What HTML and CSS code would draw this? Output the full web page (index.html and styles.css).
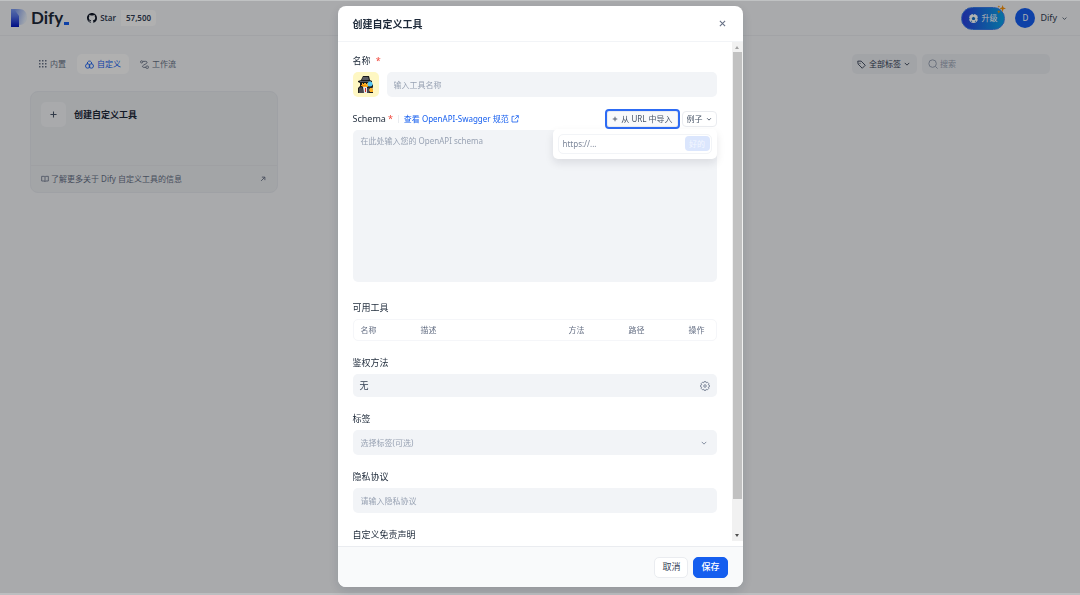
FILE: index.html
```html
<!DOCTYPE html>
<html lang="zh-Hans">
<head>
  <meta charset="utf-8">
  <meta name="viewport" content="width=device-width, initial-scale=1">
  <title>Dify</title>
  <link rel="stylesheet" href="styles.css">
</head>
<body>
  <header class="topbar">
    <a class="logo" href="#">
      <svg width="16" height="18" viewBox="0 0 16 18">
        <defs>
          <linearGradient id="logo-stem" x1="0" y1="0" x2="0" y2="1">
            <stop offset="0" stop-color="#7d9cf2"/>
            <stop offset=".4" stop-color="#5573e6"/>
            <stop offset="1" stop-color="#0014c0"/>
          </linearGradient>
          <linearGradient id="logo-bowl" x1="0" y1="0" x2="1" y2=".3">
            <stop offset="0" stop-color="#5c80ea"/>
            <stop offset="1" stop-color="#e3ebf7"/>
          </linearGradient>
        </defs>
        <path fill="url(#logo-bowl)" d="M0 0h8c5 0 8 3.500 8 8s-3 8-8 8z"/>
        <path fill="url(#logo-stem)" d="M0 0h3l5 7v11H0z"/>
      </svg>
      <span class="logo-text">Dify</span><span class="logo-dash"></span>
    </a>
    <a class="github" href="#">
      <span class="github-star">
        <svg width="10" height="10" viewBox="0 0 16 16"><path fill="#101828" d="M8 0C3.580 0 0 3.580 0 8c0 3.540 2.290 6.530 5.470 7.590.4.070.55-.17.55-.38v-1.490c-2.010.37-2.530-.49-2.690-.94-.09-.23-.48-.94-.82-1.130-.28-.15-.68-.52-.01-.53.63-.01 1.080.58 1.230.82.72 1.210 1.870.87 2.330.66.07-.52.28-.87.51-1.070-1.780-.2-3.640-.89-3.640-3.950 0-.87.31-1.590.82-2.150-.08-.2-.36-1.020.08-2.120 0 0 .67-.21 2.200.82a7.600 7.600 0 0 1 4 0c1.530-1.040 2.200-.82 2.200-.82.44 1.100.16 1.920.08 2.120.51.56.82 1.270.82 2.150 0 3.070-1.870 3.750-3.650 3.950.29.25.54.73.54 1.480v2.190c0 .21.15.46.55.38A8 8 0 0 0 16 8c0-4.420-3.580-8-8-8z"/></svg>
        Star
      </span>
      <span class="github-count">57,500</span>
    </a>
    <div class="account">
      <button class="upgrade" type="button">
        <svg width="9" height="9" viewBox="0 0 12 12"><circle cx="6" cy="6" r="6" fill="#fff"/><path fill="#1570c8" d="M6 3.500l2.400 1.800-.9 2.700h-3L3.600 5.300zM5 0h2L6 1.600zM0 5l1.500.8L1.200 7.600zM12 5l-1.500.8.3 1.800zM2.500 10.500l.4-1.700 1.600 1zM9.500 10.500l-.4-1.700-1.600 1z"/></svg>
        升级
        <svg class="sparkle" width="9" height="9" viewBox="0 0 12 12"><path fill="#f79009" d="M7.500 0l1.100 3.400L12 4.500 8.600 5.700 7.500 9.500 6.400 5.700 3 4.500l3.400-1.100zM2.500 6.500l.7 1.800 1.800.7-1.800.7-.7 1.800-.7-1.800L0 9l1.800-.7zM2.500.5l.5 1.300 1.300.5L3 2.800l-.5 1.300L2 2.800.7 2.300 2 1.800z"/></svg>
      </button>
      <button class="user" type="button">
        <span class="avatar">D</span>
        Dify
        <svg width="5" height="5" viewBox="0 0 8 8"><path class="stroke" d="M1 2.500l3 3 3-3"/></svg>
      </button>
    </div>
  </header>

  <main class="page">
    <div class="toolbar">
      <nav class="tabs">
        <a class="tab" href="#">
          <svg width="8" height="8" viewBox="0 0 8 8"><path fill="currentColor" d="M0 0h1.500v1.500H0zM3 0h1.500v1.500H3zM6 0h1.500v1.500H6zM0 3h1.500v1.500H0zM3 3h1.500v1.500H3zM6 3h1.500v1.500H6zM0 6h1.500v1.500H0zM3 6h1.500v1.500H3zM6 6h1.500v1.500H6z"/></svg>
          内置
        </a>
        <a class="tab tab-active" href="#">
          <svg width="9" height="9" viewBox="0 0 12 12"><g class="stroke"><path d="M3.300 5.400a2.900 2.900 0 1 1 5.400 0"/><circle cx="3.600" cy="8" r="2.900"/><circle cx="8.400" cy="8" r="2.900"/></g></svg>
          自定义
        </a>
        <a class="tab" href="#">
          <svg width="9" height="9" viewBox="0 0 12 12"><g class="stroke"><circle cx="2.200" cy="2.500" r="1.500"/><rect x="8" y="8" width="3.200" height="3.200" rx="1"/><path d="M4 1.800h3.500c2.500 0 2.500 2.200.5 3.200L4.500 7C2.500 8 3 9.800 5 9.800h3"/></g></svg>
          工作流
        </a>
      </nav>
      <div class="filters">
        <div class="label-filter">
          <svg width="9" height="9" viewBox="0 0 12 12"><path class="stroke" d="M1 1.500h4.500l5.500 5.500-4 4L1.500 5.500z"/><circle cx="4" cy="4.300" r=".8" fill="currentColor"/></svg>
          <select aria-label="标签"><option>全部标签</option></select>
          <svg width="6" height="6" viewBox="0 0 8 8"><path class="stroke" d="M1 2.500l3 3 3-3"/></svg>
        </div>
        <div class="search">
          <svg width="10" height="10" viewBox="0 0 12 12"><g class="stroke"><circle cx="5.500" cy="5.500" r="4.500"/><path d="M9 9l2.500 2.500"/></g></svg>
          <input type="text" placeholder="搜索" aria-label="搜索">
        </div>
      </div>
    </div>

    <div class="cards">
      <div class="card">
        <button class="card-main" type="button">
          <span class="card-icon">
            <svg width="7" height="7" viewBox="0 0 8 8"><path class="stroke" d="M4 .5v7M.5 4h7"/></svg>
          </span>
          创建自定义工具
        </button>
        <a class="card-link" href="#">
          <svg width="8" height="8" viewBox="0 0 12 12"><path class="stroke" d="M1 2h4l1 1 1-1h4v7H7l-1 1-1-1H1zM6 3v7"/></svg>
          <span>了解更多关于 Dify 自定义工具的信息</span>
          <svg width="6" height="6" viewBox="0 0 8 8"><path class="stroke" d="M1.500 6.500l5-5M2.500 1.500h4v4"/></svg>
        </a>
      </div>
    </div>
  </main>

  <div class="overlay">
    <form class="modal" role="dialog" aria-labelledby="modal-title">
      <div class="modal-header">
        <h1 id="modal-title">创建自定义工具</h1>
        <button class="close" type="button" aria-label="关闭">
          <svg width="7" height="7" viewBox="0 0 8 8"><path class="stroke" d="M1 1l6 6M7 1L1 7"/></svg>
        </button>
      </div>

      <div class="modal-body">
        <div class="fields">
          <div class="field">
            <div class="field-head"><label for="name">名称</label> <span class="required required-wide">*</span></div>
            <div class="name-row">
              <button class="emoji" type="button" aria-label="图标">
                <svg width="18" height="19" viewBox="0 0 18 19">
                  <path fill="#1c1c1c" d="M6 1h6l1 4 2 1v2h-1l2 2v2l-1 2 1 1v3H1v-5l2-2V8L1 7V6l3-1z"/>
                  <path fill="#5a5c62" d="M6 2h5l1 3H5zM3 6h11v1H3z"/>
                  <path fill="#48494e" d="M2 13l3-1 2 6H2zM10 13h2l1 2-1 3h-2z"/>
                  <path fill="#fdb022" d="M5 8h7v3l-2 1H6l-1-1z"/>
                  <path fill="#1c1c1c" d="M6 8h1v1H6zM9 8h1v1H9z"/>
                  <path fill="#f79009" d="M4 10h5v1H4z"/>
                  <path fill="#e4e7ec" d="M6 12h4v6H7z"/>
                  <path fill="#d92d20" d="M8 13h1v4H8z"/>
                  <circle cx="13" cy="9" r="2.500" fill="#53c7f5"/>
                  <path fill="#fdb022" d="M13 13h2l1 2v2h-3l-1-2z"/>
                </svg>
              </button>
              <input class="control" id="name" type="text" placeholder="输入工具名称">
            </div>
          </div>

          <div class="field field-schema">
            <div class="schema-head">
              <label for="schema">Schema</label><span class="required">*</span>
              <span class="divider"></span>
              <a class="spec-link" href="#">
                查看 OpenAPI-Swagger 规范
                <svg width="8" height="8" viewBox="0 0 12 12"><path class="stroke" d="M5 2H1.500v8.500H10V7M7 1h4v4M11 1L5.500 6.500"/></svg>
              </a>
              <div class="schema-actions">
                <button class="small-button import-button" type="button">
                  <svg width="6" height="6" viewBox="0 0 8 8"><path class="stroke" d="M4 1v6M1 4h6"/></svg>
                  从 URL 中导入
                </button>
                <div class="small-button example">
                  <select aria-label="例子"><option>例子</option></select>
                  <svg width="6" height="6" viewBox="0 0 8 8"><path class="stroke" d="M1.500 3L4 5.500 6.500 3"/></svg>
                </div>
                <div class="url-popover">
                  <div class="url-box">
                    <input type="text" placeholder="https://..." aria-label="URL">
                    <button type="button" disabled>好的</button>
                  </div>
                </div>
              </div>
            </div>
            <textarea class="control schema" id="schema" placeholder="在此处输入您的 OpenAPI schema"></textarea>
          </div>

          <div class="field field-tools">
            <div class="field-head" id="tools-label">可用工具</div>
            <div class="tools">
              <table aria-labelledby="tools-label">
                <thead>
                  <tr>
                    <th class="col-name">名称</th>
                    <th>描述</th>
                    <th class="col-method">方法</th>
                    <th class="col-path">路径</th>
                    <th class="col-action">操作</th>
                  </tr>
                </thead>
              </table>
            </div>
          </div>

          <div class="field">
            <div class="field-head" id="auth-label">鉴权方法</div>
            <button class="control auth" type="button" aria-labelledby="auth-label">
              无
              <svg width="10" height="10" viewBox="0 0 12 12"><g class="stroke"><path d="M5 .7h2l.5 1.400 1.500-.6 1.500 1.500-.6 1.500 1.400.5v2l-1.400.5.6 1.500L9 10.500l-1.500-.6L7 11.300H5l-.5-1.400-1.500.6L1.500 9l.6-1.500L.7 7V5l1.400-.5L1.500 3 3 1.500l1.500.6z"/><circle cx="6" cy="6" r="1.500"/></g></svg>
            </button>
          </div>

          <div class="field">
            <div class="field-head"><label for="labels">标签</label></div>
            <div class="select-wrap">
              <select class="control" id="labels"><option>选择标签(可选)</option></select>
              <svg width="6" height="6" viewBox="0 0 8 8"><path class="stroke" d="M1 2.500l3 3 3-3"/></svg>
            </div>
          </div>

          <div class="field">
            <div class="field-head"><label for="privacy">隐私协议</label></div>
            <input class="control" id="privacy" type="text" placeholder="请输入隐私协议">
          </div>

          <div class="field">
            <div class="field-head"><label for="disclaimer">自定义免责声明</label></div>
            <input class="control" id="disclaimer" type="text">
          </div>
        </div>

        <div class="scrollbar">
          <span class="arrow arrow-up"></span>
          <span class="thumb"></span>
          <span class="arrow arrow-down"></span>
        </div>
      </div>

      <div class="modal-footer">
        <button class="button" type="button">取消</button>
        <button class="button button-primary" type="submit">保存</button>
      </div>
    </form>
  </div>
</body>
</html>
```
FILE: styles.css
```css
* {
  box-sizing: border-box;
}
body {
  margin: 0;
  min-height: 100vh;
  border-top: 1px solid #c0c2c3;
  border-bottom: 2px solid #bcbec0;
  background-color: #f2f4f7;
  color: #344054;
  font-family: "Noto Sans", "Noto Sans CJK SC", sans-serif;
  font-size: 8px;
  line-height: 12px;
}
button, input, select, textarea {
  margin: 0;
  padding: 0;
  border: 0;
  background: none;
  color: inherit;
  font: inherit;
}
select {
  appearance: none;
}
a {
  color: inherit;
  text-decoration: none;
}
svg {
  flex: none;
}
.stroke {
  fill: none;
  stroke: currentColor;
  stroke-width: 1.2;
}
::placeholder {
  color: #98a2b3;
  opacity: 1;
}

/* top bar */
.topbar {
  display: flex;
  align-items: center;
  height: 35px;
  padding: 0 13px 0 11px;
  border-bottom: 1px solid #e8eaee;
}
.logo {
  display: flex;
  align-items: center;
}
.logo-text {
  margin-left: 4px;
  color: #1d2939;
  font-family: Lato, sans-serif;
  font-size: 17px;
  font-weight: 700;
  line-height: 20px;
}
.logo-dash {
  width: 5px;
  height: 3px;
  margin-top: 10px;
  margin-left: 1px;
  background-color: #155eef;
}
.github {
  display: flex;
  height: 16px;
  margin-left: 14px;
  border-radius: 4px;
  overflow: hidden;
  font-weight: 600;
  line-height: 16px;
}
.github-star {
  display: flex;
  align-items: center;
  gap: 3px;
  padding: 0 5px 0 4px;
  background-color: #f3f5f8;
}
.github-count {
  padding: 0 5px;
  background-color: #fcfcfd;
}
.account {
  display: flex;
  align-items: center;
  gap: 10px;
  margin-left: auto;
}
.upgrade {
  position: relative;
  display: flex;
  align-items: center;
  gap: 3px;
  height: 23px;
  padding: 0 7px;
  border: 1px solid #3b7de8;
  border-radius: 12px;
  background: linear-gradient(90deg, #2a40e0, #0aa5e8);
  color: #fff;
}
.sparkle {
  position: absolute;
  top: -3px;
  right: -2px;
}
.user {
  display: flex;
  align-items: center;
  gap: 5px;
  font-size: 9px;
}
.avatar {
  width: 20px;
  height: 20px;
  border-radius: 50%;
  background-color: #155eef;
  color: #fff;
  font-size: 8px;
  line-height: 20px;
  text-align: center;
}

/* tool list */
.page {
  padding: 18px 30px;
}
.toolbar {
  display: flex;
  align-items: center;
  justify-content: space-between;
  height: 20px;
}
.tabs {
  display: flex;
  gap: 3px;
  margin-left: 1px;
}
.tab {
  display: flex;
  align-items: center;
  gap: 3px;
  height: 20px;
  padding: 0 8px;
  border-radius: 5px;
  color: #667085;
}
.tab-active {
  background-color: #fcfcfd;
  color: #155eef;
}
.filters {
  display: flex;
  gap: 5px;
}
.label-filter, .search {
  display: flex;
  align-items: center;
  height: 20px;
  border-radius: 5px;
  background-color: #e9ebf0;
}
.label-filter {
  gap: 3px;
  padding: 0 7px 0 5px;
}
.search {
  gap: 2px;
  width: 128px;
  padding: 0 6px;
  color: #98a2b3;
}
.search input {
  width: 100%;
}
.cards {
  display: grid;
  grid-template-columns: repeat(4, 1fr);
  gap: 9px;
  margin-top: 17px;
}
.card {
  border: 1px solid #e4e7ec;
  border-radius: 8px;
  background-color: #eaecf0;
}
.card-main {
  display: flex;
  align-items: center;
  gap: 8px;
  width: 100%;
  margin-bottom: 27px;
  padding: 10px 10px 11px;
  color: #1d2939;
  font-size: 9px;
  font-weight: 700;
}
.card-icon {
  display: flex;
  align-items: center;
  justify-content: center;
  width: 25px;
  height: 25px;
  border-radius: 5px;
  background-color: #f2f4f7;
  color: #475467;
}
.card-link {
  display: flex;
  align-items: center;
  gap: 2px;
  padding: 7px 11px 7px 10px;
  border-top: 1px solid #e4e6ea;
  color: #667085;
}
.card-link span {
  flex: 1;
}

/* modal */
.overlay {
  position: fixed;
  inset: 1px 0 2px;
  display: flex;
  justify-content: center;
  padding: 5px 0 6px;
  background-color: rgba(0, 0, 0, .3);
}
.modal {
  display: flex;
  flex-direction: column;
  width: 405px;
  max-width: 100%;
  border-radius: 8px;
  background-color: #fff;
  box-shadow: 0 4px 12px rgba(16, 24, 40, .14);
  overflow: hidden;
}
.modal-header {
  display: flex;
  align-items: center;
  justify-content: space-between;
  height: 36px;
  padding: 0 17px 0 15px;
  border-bottom: 1px solid #f2f4f7;
}
.modal-header h1 {
  margin: 0;
  color: #1d2939;
  font-size: 10px;
  font-weight: 700;
}
.close {
  display: flex;
  color: #667085;
}
.modal-body {
  display: flex;
  flex: 1;
  min-height: 0;
}
.fields {
  flex: 1;
  padding: 10px 15px 0;
  overflow: hidden;
}
.field {
  margin-bottom: 13px;
}
.field-head {
  height: 20px;
  font-size: 9px;
  line-height: 18px;
  color: #1d2939;
}
.required {
  margin-left: 2px;
  color: #f04438;
  font-size: 9px;
}
.required-wide {
  margin-left: 3px;
}
.control {
  display: block;
  width: 100%;
  height: 25px;
  padding: 0 8px;
  border-radius: 5px;
  background-color: #f2f4f7;
}
.name-row {
  display: flex;
  gap: 8px;
}
.name-row .control {
  padding: 0 7px;
}
.emoji {
  display: flex;
  flex: none;
  align-items: center;
  justify-content: center;
  width: 26px;
  height: 25px;
  border-radius: 5px;
  background-color: #fef7c3;
}
.schema-head {
  display: flex;
  align-items: center;
  height: 17px;
  margin-bottom: 3px;
}
.schema-head label {
  color: #1d2939;
  font-size: 9px;
}
.divider {
  width: 1px;
  height: 8px;
  margin: 0 5px;
  background-color: #eaecf0;
}
.spec-link {
  display: flex;
  align-items: center;
  gap: 2px;
  color: #155eef;
}
.schema-actions {
  position: relative;
  display: flex;
  gap: 4px;
  margin-left: auto;
}
.small-button {
  display: flex;
  align-items: center;
  gap: 3px;
  height: 16px;
  padding: 0 4px;
  border: 1px solid #eaecf0;
  border-radius: 4px;
  background-color: #fff;
  color: #475467;
}
.import-button {
  border-radius: 2px;
  background-color: #f9fafb;
  outline: 2px solid #2d6bf4;
}
.url-popover {
  position: absolute;
  top: 18px;
  right: 0;
  width: 164px;
  padding: 5px;
  border-radius: 5px;
  background-color: #fff;
  box-shadow: 0 4px 8px rgba(16, 24, 40, .1);
}
.url-box {
  display: flex;
  align-items: center;
  height: 20px;
  padding: 0 1px 0 4px;
  border: 1px solid #f2f4f7;
  border-radius: 5px;
}
.url-box input {
  flex: 1;
  min-width: 0;
}
.url-box input::placeholder {
  color: #7b8598;
}
.url-box button {
  width: 25px;
  height: 15px;
  border-radius: 4px;
  background-color: #dbe6fd;
  color: #f3f7ff;
}
.schema {
  height: 152px;
  padding: 5px 8px;
  resize: none;
}
.field-schema {
  margin-bottom: 17px;
}
.tools {
  border: 1px solid #f5f6f9;
  border-radius: 5px;
}
table {
  width: 100%;
  border-collapse: collapse;
  table-layout: fixed;
}
th {
  height: 20px;
  padding: 0 0 0 7px;
  color: #667085;
  font-weight: 400;
  text-align: left;
}
.col-name, .col-method, .col-path {
  width: 60px;
}
.col-action {
  width: 34px;
}
.auth {
  display: flex;
  align-items: center;
  justify-content: space-between;
  height: 23px;
  padding: 0 7px;
  font-size: 9px;
}
.auth svg {
  color: #7b8598;
}
.select-wrap {
  display: grid;
  align-items: center;
  color: #98a2b3;
}
.select-wrap > * {
  grid-area: 1 / 1;
}
.select-wrap svg {
  justify-self: end;
  margin-right: 10px;
  color: #7b8598;
  pointer-events: none;
}

/* always visible scroll track */
.scrollbar {
  display: flex;
  flex-direction: column;
  align-items: center;
  gap: 3px;
  width: 11px;
  margin-bottom: 5px;
  padding: 4px 0;
  background-color: #f1f1f1;
}
.arrow {
  border: 2px solid transparent;
}
.arrow-up {
  border-top: 0;
  border-bottom: 3px solid #a3a3a3;
}
.arrow-down {
  margin-top: auto;
  border-top: 3px solid #505050;
  border-bottom: 0;
}
.thumb {
  width: 9px;
  height: 91%;
  background-color: #c1c1c1;
}
.modal-footer {
  display: flex;
  align-items: center;
  justify-content: flex-end;
  gap: 5px;
  height: 41px;
  padding: 0 15px;
  border-top: 1px solid #eaecf0;
  background-color: #f9fafb;
}
.button {
  height: 21px;
  padding: 0 7px;
  border: 1px solid #eaecf0;
  border-radius: 5px;
  background-color: #fff;
  font-size: 9px;
}
.button-primary {
  border-color: #155eef;
  background-color: #155eef;
  color: #fff;
  font-weight: 500;
}
```
